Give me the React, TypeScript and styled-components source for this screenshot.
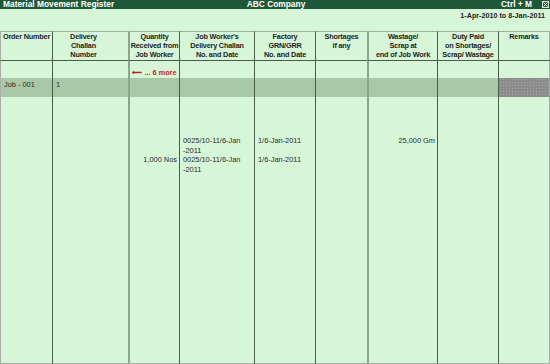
import React from "react";
import styled, { createGlobalStyle } from "styled-components";

const Global = createGlobalStyle`
  html, body { margin: 0; padding: 0; background: #d7f6d7; }
  * { box-sizing: border-box; }
`;

const Screen = styled.div`
  width: 550px;
  height: 364px;
  display: flex;
  flex-direction: column;
  background: #d7f6d7;
  font-family: "Liberation Sans", Arial, sans-serif;
  color: #1c1c1c;
  overflow: hidden;
`;

const TitleBar = styled.div`
  height: 9px;
  flex: none;
  display: grid;
  grid-template-columns: 1fr auto 1fr;
  align-items: center;
  background: #1f573a;
  color: #ffffff;
  font-weight: bold;
  font-size: 8.4px;
  line-height: 9px;
  padding: 0 1px 0 3px;
`;

const TitleRight = styled.div`
  display: flex;
  justify-content: flex-end;
  align-items: center;
  gap: 10px;
`;

const CloseBox = styled.span`
  width: 7px;
  height: 7px;
  border: 1px solid #d8e8d8;
  display: flex;
  align-items: center;
  justify-content: center;
`;

const PeriodBar = styled.div`
  height: 22px;
  flex: none;
  display: flex;
  justify-content: flex-end;
  padding: 2px 5px 0 0;
  font-weight: bold;
  font-size: 7.2px;
  line-height: 9px;
`;

const Table = styled.div`
  flex: 1;
  display: grid;
  grid-template-columns: 52px 76px 51px 75px 61px 52px 70px 61px 52px;
  grid-template-rows: 30px 17px 19px 1fr;
`;

type Sep = "edge" | "dark" | "soft";

const sepBorder = (s: Sep) =>
  s === "edge" ? "1px solid #a4b0a4" : s === "soft" ? "2px solid #8ea48e" : "1px solid #4b5c4b";

const Cell = styled.div<{ $sep: Sep; $last?: boolean }>`
  border-left: ${(p) => sepBorder(p.$sep)};
  border-right: ${(p) => (p.$last ? "1px solid #a4b0a4" : "none")};
  min-width: 0;
`;

const HeadCell = styled(Cell)<{ $align: "left" | "center"; $padR?: number }>`
  border-top: 1px solid #9fb09f;
  border-bottom: 1px solid #4b5c4b;
  font-weight: bold;
  font-size: 7.3px;
  letter-spacing: -0.2px;
  line-height: 9.2px;
  text-align: ${(p) => p.$align};
  padding: 0 ${(p) => p.$padR ?? 0}px 0 ${(p) => (p.$align === "left" ? 2 : 0)}px;
  white-space: nowrap;
`;

const MoreCell = styled(Cell)`
  display: flex;
  align-items: flex-end;
  justify-content: center;
  padding-bottom: 1px;
`;

const MoreText = styled.span`
  color: #cc2020;
  font-weight: bold;
  font-size: 7.3px;
  line-height: 9px;
`;

const RowCell = styled(Cell)<{ $mark?: boolean }>`
  background: ${(p) => (p.$mark ? "#8c8c8c" : "#a8c8a8")};
  background-image: ${(p) =>
    p.$mark ? "radial-gradient(circle, #a9a9a9 0.6px, transparent 0.8px)" : "none"};
  background-size: 3px 3px;
  font-size: 7.4px;
  line-height: 9.5px;
  padding: 2px 0 0 3px;
  color: #2a2a2a;
`;

const BodyCell = styled(Cell)<{ $align: "left" | "right" }>`
  border-bottom: 1px solid #a4b0a4;
  padding: 39px 2px 0 3px;
  font-size: 7.4px;
  line-height: 9.5px;
  color: #2a2a2a;
  text-align: ${(p) => p.$align};
  display: flex;
  flex-direction: column;
`;

const Entry = styled.div`
  height: 19px;
`;

type Col = {
  sep: Sep;
  head: string[];
  align: "left" | "center";
  padR?: number;
  row?: string;
  body: string[][];
  bodyAlign: "left" | "right";
  more?: boolean;
};

const cols: Col[] = [
  { sep: "edge", head: ["Order Number"], align: "left", row: "Job - 001", body: [], bodyAlign: "left" },
  { sep: "dark", head: ["Delivery", "Challan", "Number"], align: "center", padR: 14, row: "1", body: [], bodyAlign: "left" },
  { sep: "soft", head: ["Quantity", "Received from", "Job Worker"], align: "center", body: [[], ["1,000 Nos"]], bodyAlign: "right", more: true },
  { sep: "dark", head: ["Job Worker's", "Delivery Challan", "No. and Date"], align: "center", body: [["0025/10-11/6-Jan", "-2011"], ["0025/10-11/6-Jan", "-2011"]], bodyAlign: "left" },
  { sep: "dark", head: ["Factory", "GRN/GRR", "No. and Date"], align: "center", body: [["1/6-Jan-2011"], ["1/6-Jan-2011"]], bodyAlign: "left" },
  { sep: "dark", head: ["Shortages", "if any"], align: "center", body: [], bodyAlign: "right" },
  { sep: "soft", head: ["Wastage/", "Scrap at", "end of Job Work"], align: "center", body: [["25,000 Gm"]], bodyAlign: "right" },
  { sep: "dark", head: ["Duty Paid", "on Shortages/", "Scrap/ Wastage"], align: "center", body: [], bodyAlign: "right" },
  { sep: "dark", head: ["Remarks"], align: "center", body: [], bodyAlign: "left" },
];

export default function App() {
  const last = cols.length - 1;
  return (
    <>
      <Global />
      <Screen>
        <TitleBar>
          <span>Material Movement Register</span>
          <span>ABC Company</span>
          <TitleRight>
            <span>Ctrl + M</span>
            <CloseBox>
              <svg width="5" height="5" viewBox="0 0 5 5">
                <path d="M0.5 0.5 L4.5 4.5 M4.5 0.5 L0.5 4.5" stroke="#ffffff" strokeWidth="1" />
              </svg>
            </CloseBox>
          </TitleRight>
        </TitleBar>
        <PeriodBar>1-Apr-2010 to 8-Jan-2011</PeriodBar>
        <Table>
          {cols.map((c, i) => (
            <HeadCell key={"h" + i} $sep={c.sep} $last={i === last} $align={c.align} $padR={c.padR}>
              {c.head.map((l) => (
                <div key={l}>{l}</div>
              ))}
            </HeadCell>
          ))}
          {cols.map((c, i) => (
            <MoreCell key={"m" + i} $sep={c.sep} $last={i === last}>
              {c.more && <MoreText>⟵ ... 6 more</MoreText>}
            </MoreCell>
          ))}
          {cols.map((c, i) => (
            <RowCell key={"r" + i} $sep={c.sep} $last={i === last} $mark={i === last}>
              {c.row}
            </RowCell>
          ))}
          {cols.map((c, i) => (
            <BodyCell key={"b" + i} $sep={c.sep} $last={i === last} $align={c.bodyAlign}>
              {c.body.map((e, j) => (
                <Entry key={j}>
                  {e.map((l) => (
                    <div key={l}>{l}</div>
                  ))}
                </Entry>
              ))}
            </BodyCell>
          ))}
        </Table>
      </Screen>
    </>
  );
}
